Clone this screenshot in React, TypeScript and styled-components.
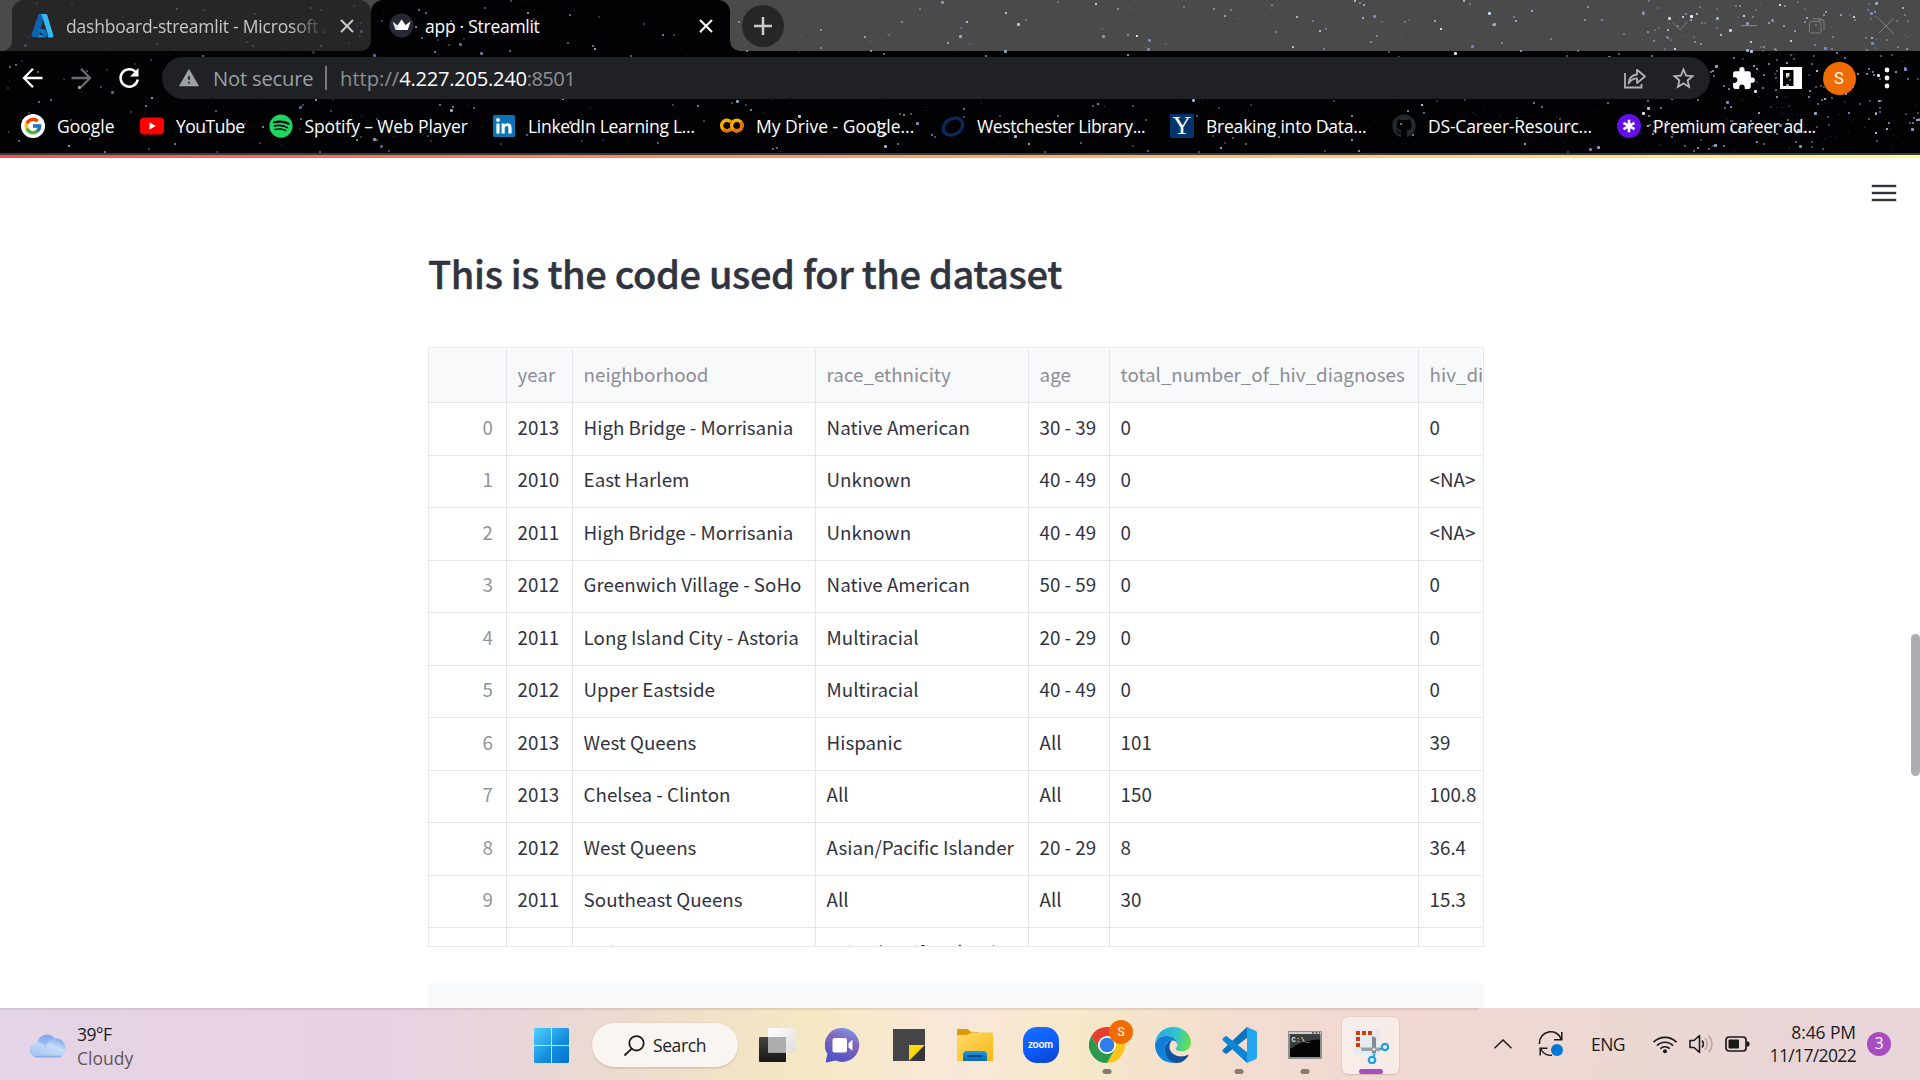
import React from "react";
import styled, { createGlobalStyle, css } from "styled-components";
import { FcGoogle } from "react-icons/fc";
import { FaGithub, FaSpotify } from "react-icons/fa";
import { MdExtension, MdStarBorder, MdWarning } from "react-icons/md";

const UI = `"Open Sans", "Noto Sans", sans-serif`;
const SOURCE = `"Noto Sans CJK SC", "Noto Sans", sans-serif`;

const GlobalStyle = createGlobalStyle`
  * { box-sizing: border-box; }
  body { margin: 0; background: #fff; overflow: hidden; }
`;

const Screen = styled.div`
  width: 1920px;
  height: 1080px;
  display: flex;
  flex-direction: column;
  overflow: hidden;
  font-family: ${UI};
`;

const UiText = styled.span<{ $track?: number; $size?: number; $color?: string }>`
  font-size: ${(p) => p.$size ?? 17.5}px;
  letter-spacing: ${(p) => p.$track ?? 0}px;
  color: ${(p) => p.$color ?? "#fff"};
  white-space: pre;
`;

/* ---------- browser chrome ---------- */

const Browser = styled.header`
  position: relative;
  flex: none;
  height: 155px;
  display: flex;
  flex-direction: column;
  background: #020204;
  border-bottom: 2px solid #3c3c3e;
`;

const StarLayer = styled.svg`
  position: absolute;
  left: 0;
  top: 0;
`;

const TabStrip = styled.div`
  display: flex;
  height: 51px;
`;

const StripLead = styled.div`
  width: 12px;
  background: #262626;
  &::before {
    content: "";
    display: block;
    height: 100%;
    background: #4a4a4a;
    border-bottom-right-radius: 10px;
  }
`;

const TabSlot = styled.div`
  width: 359px;
  background: linear-gradient(#4a4a4a 50%, #020204 50%);
`;

const Tab = styled.div<{ $active?: boolean }>`
  height: 51px;
  display: flex;
  align-items: center;
  padding: 0 17px 0 ${(p) => (p.$active ? 18 : 19)}px;
  background: ${(p) => (p.$active ? "#020204" : "#262626")};
  border-radius: ${(p) => (p.$active ? "12px 12px 0 0" : "12px 12px 10px 0")};
  & > * { position: relative; }
`;

const TabTitle = styled.div<{ $fade?: boolean }>`
  flex: 1;
  display: flex;
  overflow: hidden;
  margin: 0 ${(p) => (p.$fade ? 14 : 19)}px 0 ${(p) => (p.$fade ? 12 : 11)}px;
  line-height: 26px;
  ${(p) =>
    p.$fade &&
    css`
      mask-image: linear-gradient(90deg, #000 86%, transparent 100%);
    `}
`;

const StripRest = styled.div`
  flex: 1;
  background: #020204;
`;

const StripRestFill = styled.div`
  height: 100%;
  display: flex;
  align-items: center;
  padding-left: 12px;
  background: #4a4a4a;
  border-bottom-left-radius: 10px;
`;

const NewTab = styled.div`
  position: relative;
  width: 42px;
  height: 42px;
  display: grid;
  place-items: center;
  border-radius: 50%;
  background: #262626;
`;

const WindowControls = styled.div`
  position: relative;
  display: flex;
  margin-left: auto;
  height: 44px;
`;

const WindowButton = styled.div`
  width: 68.6px;
  display: grid;
  place-items: center;
`;

const Toolbar = styled.div`
  position: relative;
  display: flex;
  align-items: center;
  height: 54px;
  padding-left: 9px;
`;

const ToolButton = styled.div`
  width: 48px;
  height: 42px;
  display: grid;
  place-items: center;
  color: #fff;
`;

const Omnibox = styled.div`
  display: flex;
  align-items: center;
  width: 1548px;
  height: 42px;
  margin: 0 9px;
  padding: 0 3px 0 16px;
  border-radius: 21px;
  background: #202124;
  color: #9aa0a6;
`;

const SecurityNote = styled.div`
  display: flex;
  align-items: center;
  width: 147px;
  gap: 13px;
`;

const OmniDivider = styled.div`
  width: 2px;
  height: 24px;
  margin-right: 13px;
  background: #77797d;
`;

const Url = styled.div`
  flex: 1;
`;

const Avatar = styled.div<{ $size: number }>`
  display: grid;
  place-items: center;
  width: ${(p) => p.$size}px;
  height: ${(p) => p.$size}px;
  border-radius: 50%;
  background: #f06c00;
  color: #fff;
  font: ${(p) => p.$size * 0.5}px Roboto, sans-serif;
`;

const Bookmarks = styled.nav`
  position: relative;
  display: flex;
  align-items: center;
  height: 41px;
  padding-left: 21px;
`;

const Bookmark = styled.div<{ $width: number }>`
  display: flex;
  align-items: center;
  gap: 12px;
  flex: none;
  width: ${(p) => p.$width}px;
`;

const SiteIcon = styled.div<{ $bg?: string; $round?: boolean; $color?: string }>`
  width: 24px;
  height: 24px;
  display: grid;
  place-items: center;
  flex: none;
  background: ${(p) => p.$bg ?? "transparent"};
  border-radius: ${(p) => (p.$round ? "50%" : "1px")};
  color: ${(p) => p.$color ?? "#fff"};
`;

const YaleMark = styled.span`
  font: 26px/24px "Liberation Serif", serif;
`;

/* ---------- page ---------- */

const Page = styled.main`
  position: relative;
  flex: 1;
  min-height: 0;
  overflow: hidden;
  background: #fff;
`;

const Decoration = styled.div`
  height: 3px;
  background: linear-gradient(90deg, #ff4b4b, #fffd80);
`;

const PageTools = styled.div`
  display: flex;
  justify-content: flex-end;
  height: 86px;
  padding: 27px 24px 0 0;
`;

const MenuBars = styled.div`
  width: 24px;
  height: 16px;
  display: flex;
  flex-direction: column;
  justify-content: space-between;
  & > i {
    height: 2px;
    background: #31333f;
    box-shadow: 0 0 0 0.5px rgba(49, 51, 63, 0.4);
  }
`;

const Column = styled.section`
  width: 1056px;
  margin-left: 428px;
`;

const Heading = styled.h2`
  margin: 0 0 46px;
  font: 500 38px/57px ${SOURCE};
  letter-spacing: -0.36px;
  color: #31333f;
  -webkit-text-stroke: 0.4px #31333f;
  white-space: nowrap;
`;

const TableFrame = styled.div`
  height: 600px;
  padding-top: 1px;
  border: 1px solid #e8e9eb;
  overflow: hidden;
  font: 18.75px ${SOURCE};
`;

const Row = styled.div<{ $head?: boolean }>`
  display: grid;
  grid-template-columns: 78px 66px 243px 213px 81px 309px 63px;
  width: 1053px;
  height: ${(p) => (p.$head ? 54 : 52.5)}px;
  overflow: hidden;
  background: ${(p) => (p.$head ? "#f8f9fb" : "#fff")};
  color: ${(p) => (p.$head ? "#8c8d95" : "#31333f")};
`;

const Cell = styled.div<{ $index?: boolean; $raise: number }>`
  padding: 0 ${(p) => (p.$index ? 13 : 0)}px ${(p) => p.$raise}px 10.6px;
  display: flex;
  align-items: center;
  justify-content: ${(p) => (p.$index ? "flex-end" : "flex-start")};
  border-right: 1px solid #e4e5e8;
  border-bottom: 1px solid #e4e5e8;
  white-space: nowrap;
  min-width: 0;
  ${(p) => p.$index && "color: #93949b;"}
  &:last-child { border-right: 0; }
`;

const CodeBlock = styled.div`
  height: 60px;
  margin-top: 36px;
  border-radius: 6px;
  background: #f8f9fb;
`;

const ScrollThumb = styled.div`
  position: absolute;
  right: 0;
  top: 479px;
  width: 9px;
  height: 142px;
  border-radius: 5px;
  background: #adadb3;
`;

/* ---------- taskbar ---------- */

const Taskbar = styled.footer`
  position: relative;
  flex: none;
  height: 72px;
  display: flex;
  align-items: center;
  background: linear-gradient(93deg, #e4d5e8 0%, #e7d3e3 8%, #e7d2e3 20%, #e9d7d8 28%, #edddcb 34%,
    #f5e8c3 42%, #f8e8d2 47%, #f8e7d8 50%, #f6e8c9 56%, #f3dcd0 65%, #f0d7d2 74%, #ecd8d2 84%, #e9d5d6 93%, #e9d7da 100%);
  &::before {
    content: "";
    position: absolute;
    left: 0;
    top: 0;
    width: 1479px;
    height: 2px;
    background: rgba(90, 50, 70, 0.12);
  }
`;

const Weather = styled.div`
  display: flex;
  align-items: center;
  width: 518px;
  padding: 3px 0 0 29px;
  gap: 10px;
`;

const Lines = styled.div<{ $right?: boolean }>`
  display: flex;
  flex-direction: column;
  line-height: ${(p) => (p.$right ? 23 : 24)}px;
  align-items: ${(p) => (p.$right ? "flex-end" : "flex-start")};
`;

const Slot = styled.div`
  position: relative;
  width: 66px;
  height: 72px;
  padding: 2px 0 0 1px;
  display: grid;
  place-items: center;
`;

const ActiveTile = styled.div`
  width: 57px;
  height: 57px;
  display: grid;
  place-items: center;
  margin-top: 1px;
  border-radius: 6px;
  background: rgba(255, 255, 255, 0.52);
  box-shadow: 0 0 0 1px rgba(160, 120, 110, 0.1), 0 1px 1px rgba(120, 80, 70, 0.16);
`;

const RunMark = styled.div<{ $focus?: boolean }>`
  position: absolute;
  bottom: 6px;
  left: 34px;
  width: ${(p) => (p.$focus ? 24 : 9)}px;
  height: 5px;
  border-radius: 3px;
  background: ${(p) => (p.$focus ? "#a94cc0" : "#857b73")};
  transform: translateX(-50%);
`;

const AccountBadge = styled.div`
  position: absolute;
  left: 36px;
  top: 12px;
`;

const SearchPill = styled.div`
  width: 146px;
  height: 44px;
  margin: 2px 5px 0 8px;
  display: flex;
  align-items: center;
  padding-left: 32px;
  gap: 8px;
  border-radius: 22px;
  background: #faf5f0;
  box-shadow: 0 0 0 1px rgba(160, 120, 110, 0.08), 0 2px 1px rgba(120, 80, 70, 0.14);
`;

const Tray = styled.div`
  display: flex;
  align-items: center;
  margin-left: 76px;
  height: 72px;
`;

const TrayItem = styled.div<{ $width: number }>`
  width: ${(p) => p.$width}px;
  display: grid;
  place-items: center;
`;

const Clock = styled.div`
  width: 95px;
  display: flex;
  justify-content: flex-end;
`;

const Count = styled.div`
  width: 24px;
  height: 24px;
  margin-left: 11px;
  border-radius: 50%;
  background: #a94cc0;
  color: #fff;
  text-align: center;
  font: 16px/23px ${UI};
`;

/* ---------- starfield ---------- */

type Star = { x: number; y: number; s: number; o: number; c: string };

function makeStars(): Star[] {
  let state = 48271;
  const rnd = () => {
    state = (state + 0x6d2b79f5) | 0;
    let t = Math.imul(state ^ (state >>> 15), 1 | state);
    t = (t + Math.imul(t ^ (t >>> 7), 61 | t)) ^ t;
    return ((t ^ (t >>> 14)) >>> 0) / 4294967296;
  };
  const palette = ["#9db8e8", "#c8dcf8", "#f0f6ff", "#7d8ecc", "#9a96c4"];
  const stars: Star[] = [];
  const add = (x: number, w: number, n: number, bright: number) => {
    for (let i = 0; i < n; i++) {
      const b = rnd();
      const px = x + rnd() * w;
      const py = rnd() * 151;
      const dim = px > 12 && px < 371 && py < 51 ? 0.45 : 1;
      stars.push({
        x: Math.round(px),
        y: Math.round(py),
        s: b > 0.92 ? 3 : b > 0.4 ? 2 : 1,
        o: (0.15 + b * b * bright) * dim,
        c: palette[Math.floor(rnd() * palette.length)],
      });
    }
  };
  add(0, 600, 260, 0.6);
  add(600, 130, 20, 0.5);
  add(730, 550, 230, 0.8);
  add(1280, 370, 150, 0.85);
  add(1640, 278, 420, 0.85);
  return stars;
}

const STARS = makeStars();

const Starfield = () => (
  <StarLayer width="1920" height="153">
    {STARS.map((s, i) => (
      <rect key={i} x={s.x} y={s.y} width={s.s} height={s.s} rx={s.s > 2 ? 1 : 0} fill={s.c} opacity={s.o} />
    ))}
  </StarLayer>
);

/* ---------- icons ---------- */

const CloseX = ({ color }: { color: string }) => (
  <svg width="14" height="14" viewBox="0 0 14 14" stroke={color} strokeWidth="2">
    <path d="M1 1l12 12M13 1L1 13" />
  </svg>
);

const AzureIcon = () => (
  <svg width="23" height="24" viewBox="0 0 23 22" preserveAspectRatio="none">
    <path d="M7.600 0h6L7 21H2.200C.8 21 .1 20 .6 18.600z" fill="#0f62b0" />
    <path d="M6 14l8 0 3 7-4-1z" fill="#0078d4" />
    <path d="M9.200 0h5.400c.8 0 1.400.5 1.700 1.200L22.300 19.400c.4 1.200-.3 2.200-1.600 2.200h-5c1 0 1.700-1 1.400-2L11 1.500C10.600.5 10 0 9.200 0z" fill="#36b8f2" />
    <path d="M12.500 6l-4 12.500 7.300 2.900-8.900.2z" fill="#1d86d8" />
  </svg>
);

const StreamlitIcon = () => (
  <svg width="25" height="25" viewBox="0 0 25 25">
    <circle cx="12.500" cy="12.500" r="12" fill="#262833" />
    <path d="M3.500 8.500l5.100 3.700L12.500 6.500l3.900 5.700 5.100-3.700-3 8.500h-12z" fill="#dedee2" />
    <path d="M12.500 6.500l3.900 5.700 5.100-3.700-3 8.500H7.500z" fill="#fff" />
  </svg>
);

const ArrowIcon = ({ flip, color }: { flip?: boolean; color: string }) => (
  <svg width="22" height="22" viewBox="0 0 22 22" fill="none" stroke={color} strokeWidth="2.300">
    <path d={flip ? "M1.500 11h18M11 1.800l9 9.200-9 9.200" : "M20.500 11h-18M11 1.800L2 11l9 9.200"} />
  </svg>
);

const ReloadIcon = () => (
  <svg width="24" height="24" viewBox="0 0 24 24" fill="none">
    <path d="M20.800 13.500A8.700 8.700 0 1 1 18.600 6" stroke="#fff" strokeWidth="2.500" />
    <path d="M21.500 2v8.500H13z" fill="#fff" />
  </svg>
);

const ShareIcon = () => (
  <svg width="24" height="24" viewBox="0 0 24 24" fill="none" stroke="#aeb1b5" strokeWidth="1.800">
    <path d="M2 7v14.500h16.500V18" />
    <path d="M5.500 17.500c.4-5 3-8.300 8.500-9V3.800l8 6.700-8 6.500v-4.600c-3.800 0-6.300 1.600-8.500 5.100z" strokeLinejoin="round" />
  </svg>
);

const SidePanelIcon = () => (
  <svg width="22" height="22" viewBox="0 0 22 22">
    <path d="M0 0h22v22H0zM3 3v16h10.500V3z" fill="#fff" fillRule="evenodd" />
    <rect x="6" y="6" width="3.500" height="3.500" fill="#ddd" />
  </svg>
);

const DotsIcon = () => (
  <svg width="6" height="22" fill="#fff">
    <circle cx="3" cy="3" r="2.400" />
    <circle cx="3" cy="11" r="2.400" />
    <circle cx="3" cy="19" r="2.400" />
  </svg>
);

const YouTubeIcon = () => (
  <svg width="24" height="24" viewBox="0 0 24 24">
    <rect y="3.500" width="24" height="17" rx="4" fill="#f00" />
    <path d="M9.500 8.500v7l6.300-3.500z" fill="#fff" />
  </svg>
);

const LinkedInIcon = () => (
  <svg width="22" height="22" viewBox="0 0 22 22">
    <rect width="22" height="22" rx="1.500" fill="#0a74b5" />
    <g fill="#fff">
      <circle cx="5" cy="5" r="1.900" />
      <path d="M3.400 8.500h3.200V18.600H3.400zM8.600 8.500h3v1.400c.5-.9 1.600-1.700 3.100-1.700 3.100 0 3.900 1.900 3.900 4.800v5.600h-3.200v-5c0-1.400-.2-2.700-1.700-2.700s-2 1.200-2 2.600v5.100H8.600z" />
    </g>
  </svg>
);

const ColabIcon = () => (
  <svg width="24" height="15" viewBox="0 0 24 15" fill="none" strokeWidth="3.400">
    <path d="M10.800 4.200A5.200 5.200 0 1 0 10.800 10.800" stroke="#f9ab00" />
    <path d="M3.200 11.200A5.200 5.200 0 0 0 10.800 10.800" stroke="#e8710a" />
    <circle cx="16.800" cy="7.500" r="5.200" stroke="#f9ab00" />
    <path d="M20.500 3.800A5.200 5.200 0 0 1 13.100 11.200" stroke="#e8710a" />
  </svg>
);

const WestchesterIcon = () => (
  <svg width="24" height="24" viewBox="0 0 24 24">
    <ellipse cx="12" cy="12.500" rx="10.300" ry="7.800" fill="none" stroke="#0b2a5c" strokeWidth="3.200" transform="rotate(-30 12 12.500)" />
  </svg>
);

const AsteriskIcon = () => (
  <svg width="14" height="14" viewBox="0 0 14 14" stroke="#fff" strokeWidth="2.600">
    <path d="M7 .8v12.400M1.500 3.900l11 6.200M12.500 3.900l-11 6.200" />
  </svg>
);

const CloudIcon = () => (
  <svg width="38" height="26" viewBox="0 0 38 26">
    <defs>
      <linearGradient id="cloudBack" x1="0" y1="0" x2="0" y2="1">
        <stop offset="0" stopColor="#7aa5ee" />
        <stop offset="1" stopColor="#c2d7f4" />
      </linearGradient>
      <linearGradient id="cloudFront" x1="1" y1="0" x2=".3" y2="1">
        <stop offset="0" stopColor="#6f9ae8" />
        <stop offset=".45" stopColor="#c6dcf6" />
        <stop offset="1" stopColor="#a5c4f3" />
      </linearGradient>
    </defs>
    <circle cx="18" cy="11.500" r="10" fill="url(#cloudBack)" />
    <path d="M8.500 24.500a7.600 7.600 0 1 1 5-13.200c2 1.400 3 3 3.500 4a9.800 9.800 0 1 1 12 9.200z" fill="url(#cloudFront)" />
    <path d="M4 22.700c1 1.200 3 1.800 4.500 1.800H29c2 0 3.500-.6 4.700-1.800z" fill="#7da4ea" opacity=".75" />
  </svg>
);

const WindowsIcon = () => (
  <svg width="35" height="35" viewBox="0 0 35 35">
    <defs>
      <linearGradient id="winFill" x1="0" y1="0" x2="1" y2="1">
        <stop offset="0" stopColor="#4fd3ff" />
        <stop offset=".55" stopColor="#1790e0" />
        <stop offset="1" stopColor="#0072cf" />
      </linearGradient>
    </defs>
    <path d="M1.500 0H17v17H0V1.500C0 .6.6 0 1.500 0zM18 0h15.500c.9 0 1.500.6 1.500 1.500V17H18zM0 18h17v17H1.500C.6 35 0 34.400 0 33.500zM18 18h17v15.500c0 .9-.6 1.500-1.500 1.500H18z" fill="url(#winFill)" />
  </svg>
);

const MagnifierIcon = () => (
  <svg width="21" height="21" viewBox="0 0 21 21" fill="none" stroke="#1b1b1b" strokeWidth="1.800">
    <circle cx="12.500" cy="8.300" r="7.200" />
    <path d="M7.500 13.800L1 20" strokeLinecap="round" />
  </svg>
);

const TaskViewIcon = () => (
  <svg width="36" height="34" viewBox="0 0 36 34">
    <defs>
      <linearGradient id="tvDark" x1="0" y1="0" x2="0" y2="1">
        <stop offset="0" stopColor="#444" />
        <stop offset="1" stopColor="#161616" />
      </linearGradient>
      <linearGradient id="tvLight" x1="0" y1="0" x2="1" y2="1">
        <stop offset="0" stopColor="#fff" />
        <stop offset="1" stopColor="#dedede" />
      </linearGradient>
    </defs>
    <rect x="0" y="9" width="27" height="25" rx="1" fill="url(#tvDark)" />
    <rect x="9" y="0" width="27" height="24.500" rx="1" fill="url(#tvLight)" />
    <path d="M9 9h18v15.500H9z" fill="#adadad" />
  </svg>
);

const ChatIcon = () => (
  <svg width="35" height="35" viewBox="0 0 35 35">
    <defs>
      <linearGradient id="chatFill" x1=".8" y1="0" x2=".4" y2="1">
        <stop offset="0" stopColor="#7d9bf0" />
        <stop offset=".4" stopColor="#8264b8" />
        <stop offset="1" stopColor="#4f52c8" />
      </linearGradient>
    </defs>
    <path d="M17.500 0a17 17 0 1 1-7 32.600L1.500 34.500c-.7 0-1-.5-.8-1L2.400 26A17 17 0 0 1 17.500 0z" fill="url(#chatFill)" />
    <rect x="7.500" y="10" width="14.500" height="14.500" rx="2" fill="#fff" />
    <path d="M23.500 15.200l4-3.400v11l-4-3.400z" fill="#fff" />
  </svg>
);

const NotesIcon = () => (
  <svg width="32" height="32" viewBox="0 0 32 32">
    <path d="M0 0h32v16L16 32H0z" fill="#444546" />
    <path d="M32 16v16H16z" fill="#353535" />
    <path d="M16 16h15.500L16 31.500z" fill="#ffd90a" />
  </svg>
);

const ExplorerIcon = () => (
  <svg width="36" height="33" viewBox="0 0 36 33">
    <defs>
      <linearGradient id="folder" x1="0" y1="0" x2="1" y2="1">
        <stop offset="0" stopColor="#ffda6c" />
        <stop offset="1" stopColor="#f9b810" />
      </linearGradient>
      <linearGradient id="folderTab" x1="0" y1="0" x2="0" y2="1">
        <stop offset="0" stopColor="#1a9be6" />
        <stop offset="1" stopColor="#0a64b4" />
      </linearGradient>
    </defs>
    <path d="M0 1.500C0 .6.600 0 1.500 0H10c2 0 3 3 5 3h6v10H0z" fill="#dd9a07" />
    <path d="M0 6h9c3 0 4-2.500 6-2.500h19.500c.9 0 1.500.6 1.500 1.500v27H0z" fill="url(#folder)" />
    <path d="M6 32v-6.500c0-2.200 1.600-3.500 3.500-3.500h17c2 0 3.500 1.300 3.500 3.500V32z" fill="url(#folderTab)" />
    <path d="M11 27h14" stroke="#0a4a86" strokeWidth="1.800" strokeLinecap="round" />
  </svg>
);

const ZoomTile = styled.div`
  width: 36px;
  height: 36px;
  border-radius: 14px;
  background: linear-gradient(160deg, #1a70ff, #0b5cff 50%, #0a44c4);
  color: #fff;
  text-align: center;
  font: 700 10.5px/34px Lato, sans-serif;
  letter-spacing: -0.2px;
`;

const ChromeIcon = () => (
  <svg width="36" height="36" viewBox="0 0 36 36">
    <path d="M18 9h15.600A18 18 0 0 1 18 36l7.800-13.500z" fill="#fcc31a" />
    <path d="M2.400 9A18 18 0 0 1 33.600 9H18l-7.800 13.500z" fill="#e43e2f" />
    <path d="M10.200 22.500L2.400 9A18 18 0 0 0 18 36l7.800-13.500z" fill="#2a9a4a" />
    <circle cx="18" cy="18" r="9" fill="#fff" />
    <circle cx="18" cy="18" r="7.300" fill="#2f7de8" />
  </svg>
);

const EdgeIcon = () => (
  <svg width="36" height="36" viewBox="0 0 36 36">
    <defs>
      <linearGradient id="edgeTop" x1="0" y1=".3" x2="1" y2=".5">
        <stop offset="0" stopColor="#27a8e8" />
        <stop offset=".55" stopColor="#2fc3d0" />
        <stop offset="1" stopColor="#66e04c" />
      </linearGradient>
      <linearGradient id="edgeMid" x1="0" y1="0" x2=".5" y2="1">
        <stop offset="0" stopColor="#1178cc" />
        <stop offset="1" stopColor="#0a8be4" />
      </linearGradient>
      <linearGradient id="edgeLow" x1="0" y1="0" x2="1" y2=".3">
        <stop offset="0" stopColor="#0c5cb0" />
        <stop offset="1" stopColor="#174a8e" />
      </linearGradient>
    </defs>
    <path d="M0 17C.8 7 8.500 0 18.200 0 29 0 36 8 36 15.500c0 5.500-4 8.800-9 8.800-4.300 0-6.200-1.300-6.200-2.600 0-1 1.500-1.400 1.500-4.300C22.300 13 18 9 12 9 6 9 1.500 12 0 17z" fill="url(#edgeTop)" />
    <path d="M0 17.500C1.500 11.500 6.500 9 12 9c6.500 0 10.300 4.300 10.300 8.400 0-2-2-3.900-4.800-3.900-5 0-7.800 4.500-7.800 9 0 6 4 11.600 10.300 13.300C9 37 0 29 0 17.500z" fill="url(#edgeMid)" />
    <path d="M17.500 13.600c-5 .2-7.800 4.500-7.800 9C9.700 30 15 36 22 36c5 0 9-3.300 11.300-7.200.3-.6-.3-1.200-1-.8-1.300.8-3.500 1.400-5.800 1.400-7 0-12-4.300-12-9.400 0-3 1.200-5.200 3-6.400z" fill="url(#edgeLow)" />
  </svg>
);

const CodeIcon = () => (
  <svg width="36" height="36" viewBox="0 0 36 36">
    <path d="M26 0L2 22.500c-.8.7-.8 1.600 0 2.200l2 1.800c.6.500 1.400.5 2 .1L27 10z" fill="#0a74c0" />
    <path d="M26 36L2 13.500c-.8-.7-.8-1.600 0-2.200l2-1.800c.6-.5 1.400-.5 2-.1L27 26z" fill="#0c86d4" />
    <path d="M26 0l8.500 3.700c1 .5 1.500 1.200 1.500 2.200v24.200c0 1-.5 1.700-1.500 2.200L26 36z" fill="#24a5f2" />
  </svg>
);

const TerminalIcon = () => (
  <svg width="34" height="28" viewBox="0 0 34 28">
    <rect width="34" height="28" rx="1" fill="#8d9092" />
    <rect x="1" y="1" width="32" height="2" fill="#c5d0d8" />
    <rect x="2" y="3.500" width="30" height="22.500" fill="#050505" />
    <path d="M2 3.500h30v5C20 9 10 12 2 18z" fill="#3c3e3e" />
    <path d="M24 1.800h2M27.500 1.800h2M31 1.800h1" stroke="#333" strokeWidth="1.300" />
    <text x="3.500" y="10.800" fontFamily="Liberation Mono, monospace" fontWeight="700" fontSize="7" fill="#e5e5e5" textLength="18">C:\_</text>
  </svg>
);

const SnipIcon = () => (
  <svg width="36" height="36" viewBox="0 0 36 36" fill="none">
    <rect x="1" y="1" width="26" height="26" rx="2" fill="#e6ebf0" />
    <path d="M3 5h16M5 9v10" stroke="#d83b01" strokeWidth="4" strokeDasharray="4 2" />
    <path d="M19.500 8l3.500 2v15.500h-4V9z" fill="#848a92" />
    <path d="M7.500 19.500H27V23H9z" fill="#9aa0a8" />
    <circle cx="21" cy="21.200" r="1.200" fill="#e8e8e8" />
    <circle cx="32" cy="19" r="3.200" stroke="#1aa0e8" strokeWidth="2.300" />
    <circle cx="19" cy="32" r="3.200" stroke="#1aa0e8" strokeWidth="2.300" />
    <path d="M27 21.500l2-1M21.500 26l-.8 3" stroke="#1aa0e8" strokeWidth="2" />
  </svg>
);

const SyncIcon = () => (
  <svg width="26" height="26" viewBox="0 0 26 26" fill="none" stroke="#1b1b1b" strokeWidth="1.500">
    <path d="M1.500 13A11.300 11.300 0 0 1 23.500 8.500M23.800 1v7.800H16M2.200 24.500v-7.300H9.500M2.500 17.500A11.300 11.300 0 0 0 14 24.300" />
    <circle cx="19" cy="19" r="6" fill="#0078d4" stroke="none" />
  </svg>
);

const WifiIcon = () => (
  <svg width="26" height="19" viewBox="0 0 26 19" fill="none" stroke="#1b1b1b" strokeWidth="1.700">
    <path d="M1.500 7.200a16 16 0 0 1 23 0M5 10.600a11.200 11.200 0 0 1 16 0M8.300 13.700a6.700 6.700 0 0 1 9.400 0" />
    <circle cx="13" cy="16.300" r="2" fill="#1b1b1b" stroke="none" />
  </svg>
);

const VolumeIcon = () => (
  <svg width="25" height="20" viewBox="0 0 25 20" fill="none" stroke="#1b1b1b" strokeWidth="1.600">
    <path d="M1 6.500h4L10.500 1.500v17L5 13.500H1z" strokeLinejoin="round" />
    <path d="M13 6.500c1.600 2 1.600 5 0 7" />
    <path d="M16 4c3 3.500 3 8.500 0 12M19.500 1.500c4.500 5 4.500 12 0 17" stroke="#b9a9a5" />
  </svg>
);

const BatteryIcon = () => (
  <svg width="25" height="16" viewBox="0 0 25 16">
    <rect x="1" y="1" width="20" height="14" rx="3" fill="none" stroke="#1b1b1b" strokeWidth="1.700" />
    <rect x="3.500" y="3.500" width="10.500" height="9" rx="1" fill="#1b1b1b" />
    <path d="M21.500 5.500H23c1.200 0 1.500 1 1.500 2.500s-.3 2.500-1.500 2.500h-1.500z" fill="#1b1b1b" />
  </svg>
);

/* ---------- data ---------- */

const HEADERS = ["", "year", "neighborhood", "race_ethnicity", "age", "total_number_of_hiv_diagnoses", "hiv_diagnoses"];

const ROWS = [
  ["0", "2013", "High Bridge - Morrisania", "Native American", "30 - 39", "0", "0"],
  ["1", "2010", "East Harlem", "Unknown", "40 - 49", "0", "<NA>"],
  ["2", "2011", "High Bridge - Morrisania", "Unknown", "40 - 49", "0", "<NA>"],
  ["3", "2012", "Greenwich Village - SoHo", "Native American", "50 - 59", "0", "0"],
  ["4", "2011", "Long Island City - Astoria", "Multiracial", "20 - 29", "0", "0"],
  ["5", "2012", "Upper Eastside", "Multiracial", "40 - 49", "0", "0"],
  ["6", "2013", "West Queens", "Hispanic", "All", "101", "39"],
  ["7", "2013", "Chelsea - Clinton", "All", "All", "150", "100.8"],
  ["8", "2012", "West Queens", "Asian/Pacific Islander", "20 - 29", "8", "36.4"],
  ["9", "2011", "Southeast Queens", "All", "All", "30", "15.3"],
  ["", "", "Union", "Asian/Pacific Islander", "", "", ""],
];

const BOOKMARKS: { label: string; width: number; track: number; icon: React.ReactNode }[] = [
  { label: "Google", width: 119, track: 0, icon: <SiteIcon $bg="#fff" $round><FcGoogle size={20} /></SiteIcon> },
  { label: "YouTube", width: 128.5, track: -0.48, icon: <SiteIcon><YouTubeIcon /></SiteIcon> },
  { label: "Spotify – Web Player", width: 223.5, track: -0.12, icon: <SiteIcon $color="#1ed760"><FaSpotify size={24} /></SiteIcon> },
  { label: "LinkedIn Learning L...", width: 228, track: -0.28, icon: <SiteIcon><LinkedInIcon /></SiteIcon> },
  { label: "My Drive - Google...", width: 221, track: 0.02, icon: <SiteIcon><ColabIcon /></SiteIcon> },
  { label: "Westchester Library...", width: 229, track: -0.37, icon: <SiteIcon><WestchesterIcon /></SiteIcon> },
  { label: "Breaking into Data...", width: 222, track: -0.22, icon: <SiteIcon $bg="#00356b"><YaleMark>Y</YaleMark></SiteIcon> },
  { label: "DS-Career-Resourc...", width: 225, track: -0.2, icon: <SiteIcon $color="#24292e"><FaGithub size={24} /></SiteIcon> },
  { label: "Premium career ad...", width: 220, track: -0.38, icon: <SiteIcon $bg="#6210e8" $round><AsteriskIcon /></SiteIcon> },
];

const Tabs = () => (
  <TabStrip>
    <StripLead />
    <TabSlot>
      <Tab>
        <AzureIcon />
        <TabTitle $fade>
          <UiText $track={-0.2} $color="#c6c6c8">dashboard-streamlit - Microsoft Azure</UiText>
        </TabTitle>
        <CloseX color="#c6c6c8" />
      </Tab>
    </TabSlot>
    <TabSlot>
      <Tab $active>
        <StreamlitIcon />
        <TabTitle>
          <UiText $track={-0.27}>app · Streamlit</UiText>
        </TabTitle>
        <CloseX color="#fff" />
      </Tab>
    </TabSlot>
    <StripRest>
      <StripRestFill>
        <NewTab>
          <svg width="18" height="18" stroke="#ccc" strokeWidth="2.500"><path d="M9 0v18M0 9h18" /></svg>
        </NewTab>
        <WindowControls>
          <WindowButton>
            <svg width="16" height="10" fill="none" stroke="#7c7c7c"><path d="M.5.5L8 9 15.500.5" /></svg>
          </WindowButton>
          <WindowButton>
            <svg width="16" height="2" fill="#858585"><rect width="16" height="1.200" /></svg>
          </WindowButton>
          <WindowButton>
            <svg width="16" height="16" fill="none" stroke="#7c7c7c"><rect x=".5" y="3.500" width="11.500" height="11.500" rx="2" /><path d="M3.500 1h8.500a3 3 0 0 1 3 3v8" /></svg>
          </WindowButton>
          <WindowButton>
            <svg width="16" height="16" stroke="#7c7c7c"><path d="M.5.5l15 15M15.500.5l-15 15" /></svg>
          </WindowButton>
        </WindowControls>
      </StripRestFill>
    </StripRest>
  </TabStrip>
);

export default function App() {
  return (
    <Screen>
      <GlobalStyle />
      <Browser>
        <Starfield />
        <Tabs />
        <Toolbar>
          <ToolButton><ArrowIcon color="#fff" /></ToolButton>
          <ToolButton><ArrowIcon flip color="#6c6c6e" /></ToolButton>
          <ToolButton><ReloadIcon /></ToolButton>
          <Omnibox>
            <SecurityNote>
              <MdWarning size={22} />
              <UiText $size={20.2} $track={-0.2} $color="#9aa0a6">Not secure</UiText>
            </SecurityNote>
            <OmniDivider />
            <Url>
              <UiText $size={20.2} $track={0} $color="#8b8f94">http://</UiText>
              <UiText $size={20.2} $track={-0.3}>4.227.205.240</UiText>
              <UiText $size={20.2} $track={-0.6} $color="#8b8f94">:8501</UiText>
            </Url>
            <ToolButton><ShareIcon /></ToolButton>
            <ToolButton><MdStarBorder size={27} color="#b4b6ba" /></ToolButton>
          </Omnibox>
          <ToolButton><MdExtension size={25} /></ToolButton>
          <ToolButton><SidePanelIcon /></ToolButton>
          <ToolButton><Avatar $size={33}>S</Avatar></ToolButton>
          <ToolButton><DotsIcon /></ToolButton>
        </Toolbar>
        <Bookmarks>
          {BOOKMARKS.map((b) => (
            <Bookmark key={b.label} $width={b.width}>
              {b.icon}
              <UiText $track={b.track}>{b.label}</UiText>
            </Bookmark>
          ))}
        </Bookmarks>
      </Browser>

      <Page>
        <Decoration />
        <PageTools>
          <MenuBars><i /><i /><i /></MenuBars>
        </PageTools>
        <Column>
          <Heading>This is the code used for the dataset</Heading>
          <TableFrame>
            <Row $head>
              {HEADERS.map((h, i) => <Cell key={i} $raise={4}>{h}</Cell>)}
            </Row>
            {ROWS.map((r, i) => (
              <Row key={i}>
                {r.map((v, j) => <Cell key={j} $index={j === 0} $raise={5.5}>{v}</Cell>)}
              </Row>
            ))}
          </TableFrame>
          <CodeBlock />
        </Column>
        <ScrollThumb />
      </Page>

      <Taskbar>
        <Weather>
          <CloudIcon />
          <Lines>
            <UiText $track={-0.5} $color="#1b1b1b">39°F</UiText>
            <UiText $color="#5d585e">Cloudy</UiText>
          </Lines>
        </Weather>
        <Slot><WindowsIcon /></Slot>
        <SearchPill>
          <MagnifierIcon />
          <UiText $track={-0.4} $color="#1b1b1b">Search</UiText>
        </SearchPill>
        <Slot><TaskViewIcon /></Slot>
        <Slot><ChatIcon /></Slot>
        <Slot><NotesIcon /></Slot>
        <Slot><ExplorerIcon /></Slot>
        <Slot><ZoomTile>zoom</ZoomTile></Slot>
        <Slot>
          <ChromeIcon />
          <AccountBadge><Avatar $size={24}>S</Avatar></AccountBadge>
          <RunMark />
        </Slot>
        <Slot><EdgeIcon /></Slot>
        <Slot><CodeIcon /><RunMark /></Slot>
        <Slot><TerminalIcon /><RunMark /></Slot>
        <Slot>
          <ActiveTile><SnipIcon /></ActiveTile>
          <RunMark $focus />
        </Slot>
        <Tray>
          <TrayItem $width={48}>
            <svg width="18" height="10" fill="none" stroke="#1b1b1b" strokeWidth="1.500"><path d="M.5 9.200L9 1l8.500 8.200" /></svg>
          </TrayItem>
          <TrayItem $width={48}><SyncIcon /></TrayItem>
          <TrayItem $width={66}><UiText $track={-0.5} $color="#1b1b1b">ENG</UiText></TrayItem>
          <TrayItem $width={48}><WifiIcon /></TrayItem>
          <TrayItem $width={24}><VolumeIcon /></TrayItem>
          <TrayItem $width={48}><BatteryIcon /></TrayItem>
          <Clock>
            <Lines $right>
              <UiText $track={-0.1} $color="#1b1b1b">8:46 PM</UiText>
              <UiText $track={-0.65} $color="#1b1b1b">11/17/2022</UiText>
            </Lines>
          </Clock>
          <Count>3</Count>
        </Tray>
      </Taskbar>
    </Screen>
  );
}
